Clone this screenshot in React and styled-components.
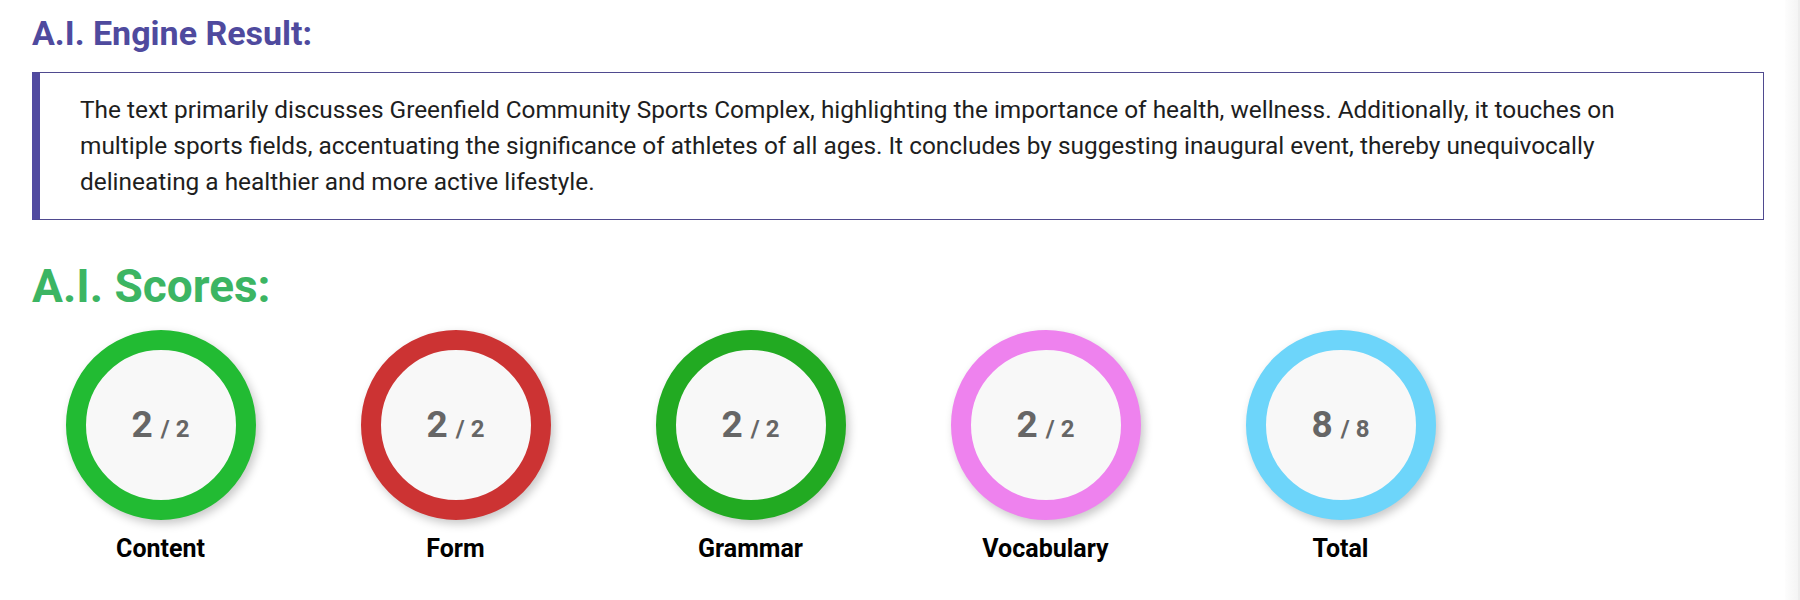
import React from "react";
import styled, { createGlobalStyle } from "styled-components";

const GlobalStyle = createGlobalStyle`
  html, body {
    margin: 0;
    padding: 0;
    background: #ffffff;
    font-family: Roboto, "Liberation Sans", Arial, sans-serif;
  }
`;

const Frame = styled.div`
  display: flex;
  height: 600px;
  overflow: hidden;
`;

const Page = styled.div`
  flex: 1;
  padding: 13px 21px 0 32px;
  box-sizing: border-box;
`;

const ScrollTrack = styled.div`
  width: 15px;
  flex: none;
  box-sizing: border-box;
  background: linear-gradient(to right, #fdfdfd, #f4f4f4);
  border-right: 2px solid #ededed;
`;

const SectionTitle = styled.h2`
  margin: 0;
  font-family: Roboto, "Liberation Sans", sans-serif;
  font-weight: 700;
  font-size: ${(p) => p.$size}px;
  line-height: ${(p) => p.$lh}px;
  color: ${(p) => p.$color};
`;

const ResultBox = styled.div`
  margin-top: 19px;
  border: 1px solid #4f4a8f;
  border-left: 8px solid #514aa0;
  padding: 19px 80px 19px 40px;
  font-size: 24.4px;
  line-height: 36px;
  color: #1e1e1e;
`;

const ScoresTitleWrap = styled.div`
  margin-top: 40px;
`;

const ScoreRow = styled.div`
  display: flex;
  gap: 38px;
  margin-top: 18px;
`;

const ScoreItem = styled.div`
  width: 257px;
  display: flex;
  flex-direction: column;
  align-items: center;
`;

const Ring = styled.div`
  width: 190px;
  height: 190px;
  box-sizing: border-box;
  border-radius: 50%;
  border: 20px solid ${(p) => p.$color};
  box-shadow: 3px 4px 10px rgba(0, 0, 0, 0.22);
  background: #f8f8f8;
  display: flex;
  align-items: center;
  justify-content: center;
`;

const ScoreText = styled.div`
  display: flex;
  align-items: baseline;
  color: #666666;
  font-weight: 700;
`;

const ScoreValue = styled.span`
  font-size: 37px;
  line-height: 40px;
`;

const ScoreMax = styled.span`
  font-size: 24px;
  margin-left: 8px;
`;

const ScoreLabel = styled.div`
  margin-top: 15px;
  font-size: 25px;
  line-height: 28px;
  font-weight: 700;
  color: #000;
`;

const scores = [
  { label: "Content", value: 2, max: 2, color: "#22bb33" },
  { label: "Form", value: 2, max: 2, color: "#cc3333" },
  { label: "Grammar", value: 2, max: 2, color: "#22aa22" },
  { label: "Vocabulary", value: 2, max: 2, color: "#ee82ee" },
  { label: "Total", value: 8, max: 8, color: "#6dd5fa" },
];

export default function App() {
  return (
    <>
      <GlobalStyle />
      <Frame>
        <Page>
          <SectionTitle $size={34} $lh={40} $color="#4f4a9e">
            A.I. Engine Result:
          </SectionTitle>
          <ResultBox>
            The text primarily discusses Greenfield Community Sports Complex,
            highlighting the importance of health, wellness. Additionally, it
            touches on multiple sports fields, accentuating the significance of
            athletes of all ages. It concludes by suggesting inaugural event,
            thereby unequivocally delineating a healthier and more active
            lifestyle.
          </ResultBox>
          <ScoresTitleWrap>
            <SectionTitle $size={46} $lh={52} $color="#3cb563">
              A.I. Scores:
            </SectionTitle>
          </ScoresTitleWrap>
          <ScoreRow>
            {scores.map((s) => (
              <ScoreItem key={s.label}>
                <Ring $color={s.color}>
                  <ScoreText>
                    <ScoreValue>{s.value}</ScoreValue>
                    <ScoreMax>/ {s.max}</ScoreMax>
                  </ScoreText>
                </Ring>
                <ScoreLabel>{s.label}</ScoreLabel>
              </ScoreItem>
            ))}
          </ScoreRow>
        </Page>
        <ScrollTrack />
      </Frame>
    </>
  );
}
